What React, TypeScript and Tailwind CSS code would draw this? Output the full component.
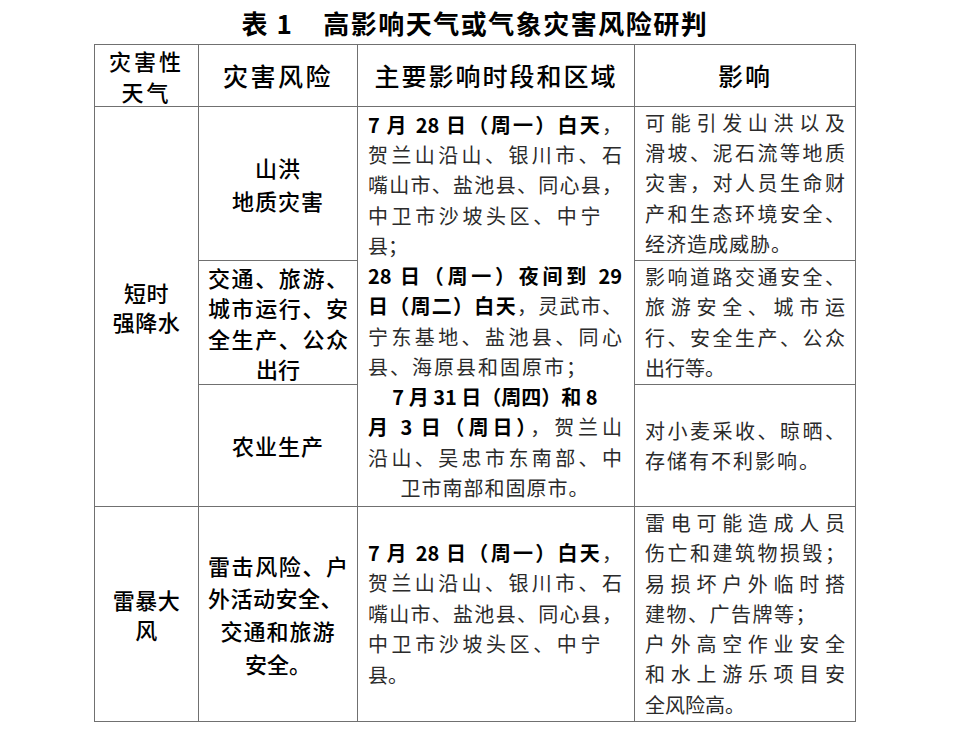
import React from "react";

const cell = "border-r border-b border-[#707070] flex flex-col justify-center";
const J = "text-justify [text-align-last:justify]";

function B({ children }: { children: React.ReactNode }) {
  return <span className="font-bold text-black">{children}</span>;
}

export default function App() {
  return (
    <div className="min-h-[740px] w-[960px] bg-white pl-[94px] font-['Noto_Sans_CJK_SC',sans-serif]">
      <div className="w-[762px]">
        <div className="flex h-[44px] items-center justify-center text-[26px] font-bold tracking-[1.5px] text-black">
          <span>表 1</span>
          <span className="ml-[30px]">高影响天气或气象灾害风险研判</span>
        </div>
        <div className="grid grid-cols-[104px_159px_277px_221px] grid-rows-[62px_154px_124px_122px_215px] border-l border-t border-[#707070] text-black">
          {/* header */}
          <div className={`${cell} col-start-1 row-start-1 items-center text-[22px] font-medium leading-[31px] tracking-[3px]`}>
            <div>灾害性</div>
            <div>天气</div>
          </div>
          <div className={`${cell} col-start-2 row-start-1 items-center text-[25px] font-medium tracking-[2.5px]`}>
            <div>灾害风险</div>
          </div>
          <div className={`${cell} col-start-3 row-start-1 items-center text-[25px] font-medium tracking-[2px]`}>
            <div>主要影响时段和区域</div>
          </div>
          <div className={`${cell} col-start-4 row-start-1 items-center text-[25px] font-medium tracking-[2px]`}>
            <div>影响</div>
          </div>

          {/* col1 merged */}
          <div className={`${cell} col-start-1 row-start-2 row-span-3 items-center text-[22px] font-medium leading-[29px] tracking-[0.5px]`}>
            <div>短时</div>
            <div>强降水</div>
          </div>

          {/* col2 rows */}
          <div className={`${cell} col-start-2 row-start-2 items-center text-[22px] font-medium leading-[33px] tracking-[1px]`}>
            <div>山洪</div>
            <div>地质灾害</div>
          </div>
          <div className={`${cell} col-start-2 row-start-3 px-[9px] text-[22px] font-medium leading-[30.3px]`}>
            <div className={J}>交通、旅游、</div>
            <div className={J}>城市运行、安</div>
            <div className={J}>全生产、公众</div>
            <div className="text-center">出行</div>
          </div>
          <div className={`${cell} col-start-2 row-start-4 items-center text-[22px] font-medium tracking-[1px]`}>
            <div>农业生产</div>
          </div>

          {/* col3 merged */}
          <div className={`${cell} col-start-3 row-start-2 row-span-3 pl-[10px] pr-[12px] text-[20px] leading-[30.25px] text-[#2b2b2b]`}>
            <div className={J}><B>7 月 28 日（周一）白天</B>，</div>
            <div className={J}>贺兰山沿山、银川市、石</div>
            <div className={J}>嘴山市、盐池县、同心县，</div>
            <div className="tracking-[3.6px]">中卫市沙坡头区、中宁</div>
            <div>县；</div>
            <div className={J}><B>28 日（周一）夜间到 29</B></div>
            <div className={J}><B>日（周二）白天</B>，灵武市、</div>
            <div className={J}>宁东基地、盐池县、同心</div>
            <div className="tracking-[2px]">县、海原县和固原市；</div>
            <div className="text-center"><B>7 月 31 日（周四）和 8</B></div>
            <div className={J}><B>月 3 日（周日）</B>，贺兰山</div>
            <div className={J}>沿山、吴忠市东南部、中</div>
            <div className="text-center tracking-[1px]">卫市南部和固原市。</div>
          </div>

          {/* col4 rows */}
          <div className={`${cell} col-start-4 row-start-2 px-[10px] text-[20px] leading-[30.3px] text-[#2b2b2b]`}>
            <div className={J}>可能引发山洪以及</div>
            <div className={J}>滑坡、泥石流等地质</div>
            <div className={J}>灾害，对人员生命财</div>
            <div className={J}>产和生态环境安全、</div>
            <div className="tracking-[1px]">经济造成威胁。</div>
          </div>
          <div className={`${cell} col-start-4 row-start-3 px-[10px] text-[20px] leading-[30.5px] text-[#2b2b2b]`}>
            <div className={J}>影响道路交通安全、</div>
            <div className={J}>旅游安全、城市运</div>
            <div className={J}>行、安全生产、公众</div>
            <div>出行等。</div>
          </div>
          <div className={`${cell} col-start-4 row-start-4 px-[10px] text-[20px] leading-[30px] text-[#2b2b2b]`}>
            <div className={J}>对小麦采收、晾晒、</div>
            <div className="tracking-[2px]">存储有不利影响。</div>
          </div>

          {/* last row */}
          <div className={`${cell} col-start-1 row-start-5 items-center text-[22px] font-medium leading-[30px] tracking-[0.5px]`}>
            <div>雷暴大</div>
            <div>风</div>
          </div>
          <div className={`${cell} col-start-2 row-start-5 px-[9px] text-[22px] font-medium leading-[32.7px]`}>
            <div className={J}>雷击风险、户</div>
            <div className="tracking-[0.5px]">外活动安全、</div>
            <div className="text-center tracking-[1px]">交通和旅游</div>
            <div className="text-center">安全。</div>
          </div>
          <div className={`${cell} col-start-3 row-start-5 pl-[10px] pr-[12px] text-[20px] leading-[30.5px] text-[#2b2b2b]`}>
            <div className={J}><B>7 月 28 日（周一）白天</B>，</div>
            <div className={J}>贺兰山沿山、银川市、石</div>
            <div className={J}>嘴山市、盐池县、同心县，</div>
            <div className="tracking-[3.6px]">中卫市沙坡头区、中宁</div>
            <div>县。</div>
          </div>
          <div className={`${cell} col-start-4 row-start-5 px-[10px] text-[20px] leading-[30.3px] text-[#2b2b2b]`}>
            <div className={J}>雷电可能造成人员</div>
            <div className={J}>伤亡和建筑物损毁；</div>
            <div className={J}>易损坏户外临时搭</div>
            <div className="tracking-[1.5px]">建物、广告牌等；</div>
            <div className={J}>户外高空作业安全</div>
            <div className={J}>和水上游乐项目安</div>
            <div>全风险高。</div>
          </div>
        </div>
      </div>
    </div>
  );
}
